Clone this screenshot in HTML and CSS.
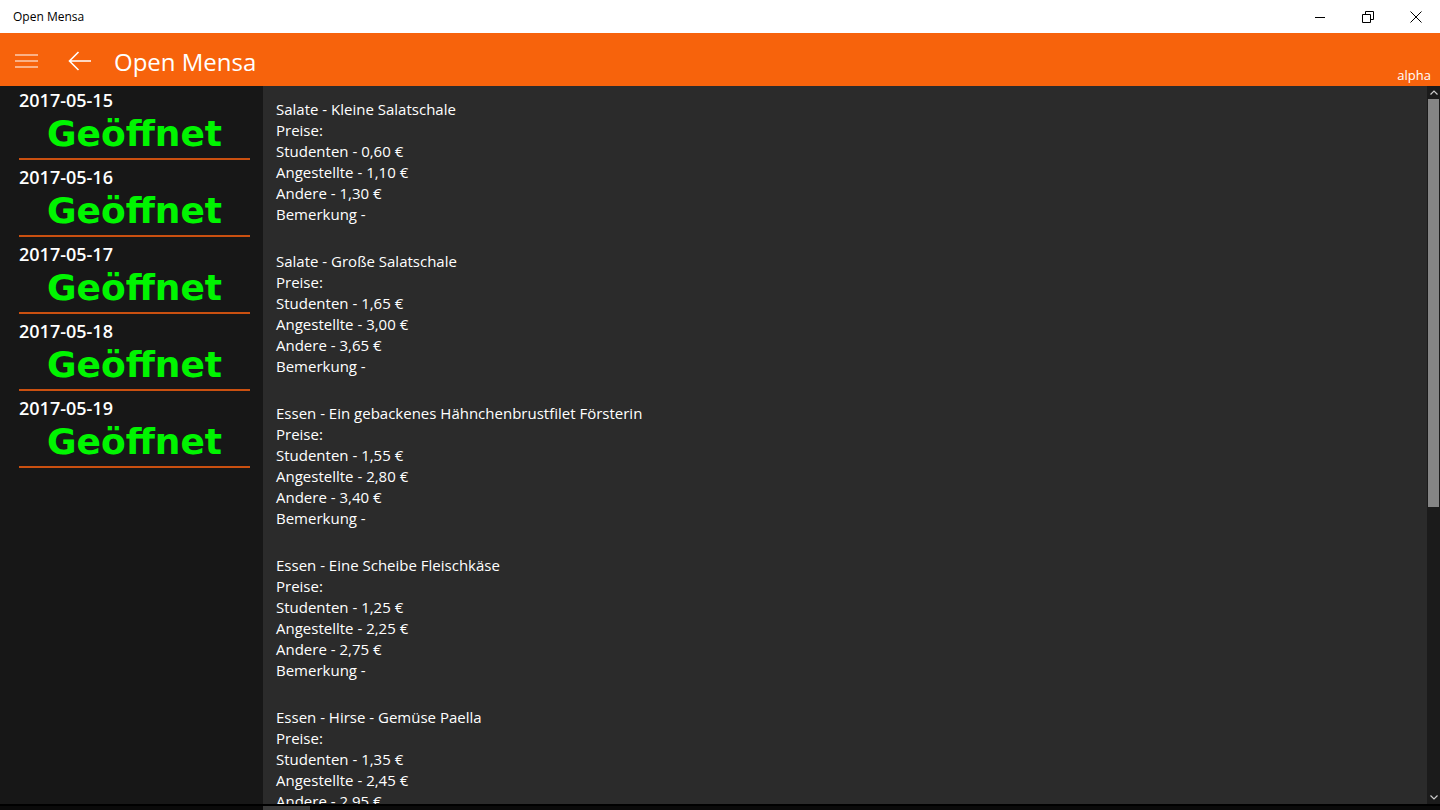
FILE: index.html
```html
<!DOCTYPE html>
<html lang="de">
<head>
<meta charset="utf-8">
<title>Open Mensa</title>
<link rel="stylesheet" href="styles.css">
</head>
<body>
<div class="window">
  <div class="titlebar">
    <span class="app-title">Open Mensa</span>
    <div class="caption-buttons">
      <div class="cap-btn">
        <svg width="12" height="12" viewBox="0 0 12 12"><path d="M1 6.5H11" stroke="#000" stroke-width="1" fill="none"/></svg>
      </div>
      <div class="cap-btn">
        <svg width="12" height="12" viewBox="0 0 12 12"><path d="M0.5 3.5H8.5V11.5H0.5Z M3.5 3.5V0.5H11.5V8.5H8.5" stroke="#000" stroke-width="1" fill="none"/></svg>
      </div>
      <div class="cap-btn">
        <svg width="12" height="12" viewBox="0 0 12 12"><path d="M0.5 0.5L11.5 11.5M11.5 0.5L0.5 11.5" stroke="#000" stroke-width="1" fill="none"/></svg>
      </div>
    </div>
  </div>
  <div class="appbar">
    <div class="icon-btn">
      <svg width="24" height="14" viewBox="0 0 24 14"><path d="M0 1H23M0 7H23M0 13H23" stroke="#fff" stroke-width="1.2" fill="none"/></svg>
    </div>
    <div class="icon-btn">
      <svg width="24" height="20" viewBox="0 0 24 20"><path d="M23 10H1.5M10.5 1L1.5 10L10.5 19" stroke="#fff" stroke-width="1.6" fill="none"/></svg>
    </div>
    <h1 class="page-title">Open Mensa</h1>
    <span class="channel">alpha</span>
  </div>
  <div class="body-area">
    <aside class="days">
      <div class="day"><div class="day-date">2017-05-15</div><div class="day-state">Geöffnet</div></div>
      <div class="day"><div class="day-date">2017-05-16</div><div class="day-state">Geöffnet</div></div>
      <div class="day"><div class="day-date">2017-05-17</div><div class="day-state">Geöffnet</div></div>
      <div class="day"><div class="day-date">2017-05-18</div><div class="day-state">Geöffnet</div></div>
      <div class="day"><div class="day-date">2017-05-19</div><div class="day-state">Geöffnet</div></div>
    </aside>
    <main class="meals">
      <div class="meal">
        <div>Salate - Kleine Salatschale</div>
        <div>Preise:</div>
        <div>Studenten - 0,60 €</div>
        <div>Angestellte - 1,10 €</div>
        <div>Andere - 1,30 €</div>
        <div>Bemerkung -</div>
      </div>
      <div class="meal">
        <div>Salate - Große Salatschale</div>
        <div>Preise:</div>
        <div>Studenten - 1,65 €</div>
        <div>Angestellte - 3,00 €</div>
        <div>Andere - 3,65 €</div>
        <div>Bemerkung -</div>
      </div>
      <div class="meal">
        <div>Essen - Ein gebackenes Hähnchenbrustfilet Försterin</div>
        <div>Preise:</div>
        <div>Studenten - 1,55 €</div>
        <div>Angestellte - 2,80 €</div>
        <div>Andere - 3,40 €</div>
        <div>Bemerkung -</div>
      </div>
      <div class="meal">
        <div>Essen - Eine Scheibe Fleischkäse</div>
        <div>Preise:</div>
        <div>Studenten - 1,25 €</div>
        <div>Angestellte - 2,25 €</div>
        <div>Andere - 2,75 €</div>
        <div>Bemerkung -</div>
      </div>
      <div class="meal">
        <div>Essen - Hirse - Gemüse Paella</div>
        <div>Preise:</div>
        <div>Studenten - 1,35 €</div>
        <div>Angestellte - 2,45 €</div>
        <div>Andere - 2,95 €</div>
        <div>Bemerkung -</div>
      </div>
    </main>
    <div class="vscroll">
      <div class="scroll-arrow">
        <svg width="8" height="5" viewBox="0 0 8 5"><path d="M0.5 4.5L4 1L7.5 4.5" stroke="#ccc" stroke-width="1.2" fill="none"/></svg>
      </div>
      <div class="scroll-thumb"></div>
      <div class="scroll-track"></div>
      <div class="scroll-arrow">
        <svg width="8" height="5" viewBox="0 0 8 5"><path d="M0.5 0.5L4 4L7.5 0.5" stroke="#ccc" stroke-width="1.2" fill="none"/></svg>
      </div>
    </div>
  </div>
  <div class="bottom-strip">
    <div class="strip-left"></div>
    <div class="strip-thumb"></div>
  </div>
</div>
</body>
</html>
```
FILE: styles.css
```css
* { box-sizing: border-box; }
html, body { margin: 0; padding: 0; }
body {
  width: 1440px;
  height: 810px;
  overflow: hidden;
  font-family: "Open Sans", "Noto Sans", sans-serif;
  background: #000;
}
.window {
  display: flex;
  flex-direction: column;
  width: 1440px;
  height: 810px;
}
.titlebar {
  height: 33px;
  background: #fff;
  display: flex;
  align-items: center;
  flex-shrink: 0;
}
.app-title {
  font-size: 12px;
  color: #000;
  padding-left: 13px;
}
.caption-buttons {
  margin-left: auto;
  display: flex;
  height: 100%;
}
.cap-btn {
  width: 48px;
  height: 100%;
  display: flex;
  align-items: center;
  justify-content: center;
}
.appbar {
  height: 53px;
  background: #f7630c;
  display: flex;
  align-items: center;
  flex-shrink: 0;
}
.icon-btn {
  width: 53px;
  height: 53px;
  display: flex;
  align-items: center;
  justify-content: center;
  padding-top: 2px;
}
.page-title {
  margin: 0 0 0 8px;
  font-size: 24px;
  font-weight: 400;
  color: #fff;
  padding-top: 4px;
}
.channel {
  margin-left: auto;
  align-self: flex-end;
  font-size: 13px;
  color: #fff;
  padding: 0 9px 2px 0;
}
.body-area {
  flex: 1;
  display: flex;
  min-height: 0;
}
.days {
  width: 263px;
  background: #171717;
  padding: 0 13px 0 19px;
  flex-shrink: 0;
}
.day {
  padding-top: 5px;
  border-bottom: 2px solid #ca5010;
  padding-bottom: 2px;
}
.day:first-child { padding-top: 2px; }
.day-date {
  font-size: 18px;
  font-weight: 600;
  line-height: 24px;
  color: #fff;
}
.day-state {
  font-family: "DejaVu Sans", Verdana, sans-serif;
  font-weight: 700;
  font-size: 36px;
  line-height: 44px;
  color: #00f500;
  text-align: center;
}
.meals {
  flex: 1;
  background: #2b2b2b;
  color: #fff;
  font-size: 15px;
  line-height: 21px;
  padding: 13px 13px;
  overflow: hidden;
}
.meal { margin-bottom: 26px; }
.vscroll {
  width: 13px;
  flex-shrink: 0;
  display: flex;
  flex-direction: column;
  background: #1b1b1b;
}
.scroll-arrow {
  height: 13px;
  display: flex;
  align-items: center;
  justify-content: center;
  background: #1b1b1b;
}
.scroll-thumb {
  height: 408px;
  background: #858585;
  margin: 0 1px 0 1px;
}
.scroll-track { flex: 1; }
.bottom-strip {
  height: 6px;
  display: flex;
  flex-shrink: 0;
  background: #0a0a0a;
  border-top: 2px solid #000;
}
.strip-left { width: 263px; }
.strip-thumb {
  width: 47px;
  background: #3a3a3a;
}
```
